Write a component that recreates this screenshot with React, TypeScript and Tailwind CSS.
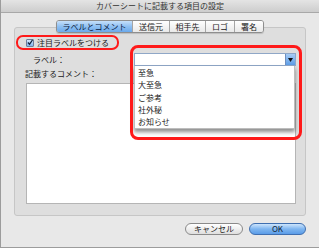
import React from 'react';

const tabs = ['ラベルとコメント', '送信元', '相手先', 'ロゴ', '署名'];
const labels = ['至急', '大至急', 'ご参考', '社外秘', 'お知らせ'];

export default function App() {
  return (
    <div
      className="relative w-[319px] h-[248px] overflow-hidden bg-[#e8e8e8] border-l border-b border-[#9c9c9c] flex flex-col text-[8px] leading-none text-[#1a1a1a]"
      style={{ fontFamily: '"Noto Sans CJK JP", "Noto Sans", sans-serif' }}
    >
      {/* Title bar */}
      <div className="h-[13px] shrink-0 flex items-center justify-center bg-gradient-to-b from-[#e4e4e4] to-[#cdcdcd] border-b border-[#a8a8a8] text-[#333]">
        カバーシートに記載する項目の設定
      </div>

      <div className="flex flex-col pt-[7px] pl-[12px] pr-[13px]">
        {/* Tabs */}
        <div className="relative z-10 flex justify-center -mb-[6px] pl-[1px]">
          <div className="flex h-[13px] rounded-[3px] border border-[#8e8e8e] overflow-hidden shadow-[0_1px_1px_rgba(0,0,0,0.15)]">
            {tabs.map((t, i) => (
              <div
                key={t}
                className={`flex items-center justify-center ${
                  i === 0
                    ? 'w-[75px] bg-gradient-to-b from-[#c6e0fa] via-[#8fc0f2] to-[#6aa9ec] text-[#0c2040]'
                    : 'bg-gradient-to-b from-[#ffffff] to-[#e9e9e9] border-l border-[#a5a5a5]'
                } ${i === 1 ? 'w-[37px]' : ''} ${i === 2 ? 'w-[36px]' : ''} ${i === 3 ? 'w-[29px]' : ''} ${i === 4 ? 'w-[29px]' : ''}`}
              >
                {t}
              </div>
            ))}
          </div>
        </div>

        {/* Group box */}
        <div className="ml-[1px] h-[189px] rounded-[3px] border border-[#c6c6c6] bg-[#dedede] flex flex-col pt-[7px] pl-[1px] pr-[9px]">
          <div className="self-start flex items-center w-[103px] h-[15px] rounded-[7px] border-2 border-[#ff1a1a] pl-[8px]">
            <div className="w-[8px] h-[8px] rounded-[1px] border border-[#6f7f99] bg-gradient-to-b from-[#d6e8fb] to-[#7fb2ea] flex items-center justify-center">
              <svg width="7" height="7" viewBox="0 0 7 7">
                <path d="M1 3.5 L3 5.5 L6.5 0.5" fill="none" stroke="#10233f" strokeWidth="1.4" />
              </svg>
            </div>
            <span className="ml-[3px]">注目ラベルをつける</span>
          </div>

          <div className="flex items-center h-[13px] mt-[3px]">
            <span className="ml-[17px] w-[102px]">ラベル：</span>
            <div className="relative">
              {/* highlight ring */}
              <div className="absolute -left-[4px] -top-[8px] w-[172px] h-[95px] rounded-[8px] border-[3px] border-[#ff1a1a] z-20" />
              <div className="flex w-[162px] h-[13px] border border-[#8fa7c7] bg-white">
                <div className="flex-1" />
                <div className="w-[10px] bg-gradient-to-b from-[#a8cdf5] to-[#5c9ce6] border-l border-[#6d8fbf] flex items-center justify-center">
                  <svg width="5" height="4" viewBox="0 0 5 4">
                    <path d="M0 0 H5 L2.5 4 Z" fill="#111" />
                  </svg>
                </div>
              </div>
              {/* popup list */}
              <div className="absolute left-0 top-[13px] z-10 w-[161px] h-[63px] bg-white border-x border-b border-[#bdbdbd] shadow-[0_3px_4px_rgba(0,0,0,0.45)] flex flex-col pt-[1px]">
                {labels.map(l => (
                  <div key={l} className="h-[12.5px] flex items-center pl-[3px] text-[#222]">
                    {l}
                  </div>
                ))}
              </div>
            </div>
          </div>

          <div className="h-[13px] flex items-center mt-[1px] pl-[9px]">記載するコメント：</div>

          <div className="mt-[3px] ml-[10px] h-[121px] bg-white border border-[#b5b5b5]" />
        </div>

        {/* Buttons */}
        <div className="flex justify-end gap-[6px] mt-[7px] pr-[-1px]">
          <div className="w-[58px] h-[12px] rounded-full border border-[#8a8a8a] bg-gradient-to-b from-[#ffffff] to-[#dedede] flex items-center justify-center">
            キャンセル
          </div>
          <div className="w-[57px] h-[12px] rounded-full border border-[#3f6fb0] bg-gradient-to-b from-[#cde5fc] via-[#7fb6f0] to-[#5a9ce8] flex items-center justify-center text-[#0c1d38]">
            OK
          </div>
        </div>
      </div>
    </div>
  );
}
